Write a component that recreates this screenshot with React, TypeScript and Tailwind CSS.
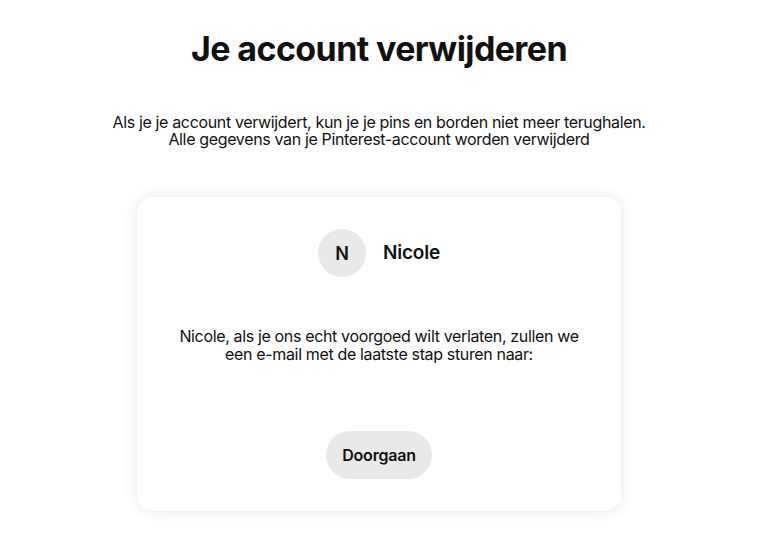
export default function App() {
  return (
    <div
      className="min-h-screen bg-white flex flex-col items-center pr-[19px] text-[#111111]"
      style={{ fontFamily: 'Inter, "Liberation Sans", sans-serif' }}
    >
      <h1 className="mt-[28px] text-[34px] leading-[42px] font-bold tracking-[-0.6px]">Je account verwijderen</h1>

      <p className="mt-[44px] text-center text-[16px] leading-[17px] tracking-[-0.35px]">
        Als je je account verwijdert, kun je je pins en borden niet meer terughalen.
        <br />
        Alle gegevens van je Pinterest-account worden verwijderd
      </p>

      <div className="mt-[49px] w-[484px] h-[314px] rounded-[16px] bg-white shadow-[0_0_16px_rgba(0,0,0,0.1)] flex flex-col items-center">
        <div className="mt-[32px] flex items-center gap-[17px]">
          <div className="w-[48px] h-[48px] rounded-full bg-[#e9e9e9] flex items-center justify-center text-[18px] font-semibold">
            N
          </div>
          <span className="text-[19px] font-semibold tracking-[-0.2px]">Nicole</span>
        </div>

        <p className="mt-[50px] text-center text-[16px] leading-[18px] tracking-[-0.35px]">
          Nicole, als je ons echt voorgoed wilt verlaten, zullen we
          <br />
          een e-mail met de laatste stap sturen naar:
        </p>

        <button className="mt-[68px] h-[48px] px-[16px] rounded-full bg-[#e9e9e9] text-[16px] font-semibold tracking-[-0.2px]">
          Doorgaan
        </button>
      </div>
    </div>
  );
}
